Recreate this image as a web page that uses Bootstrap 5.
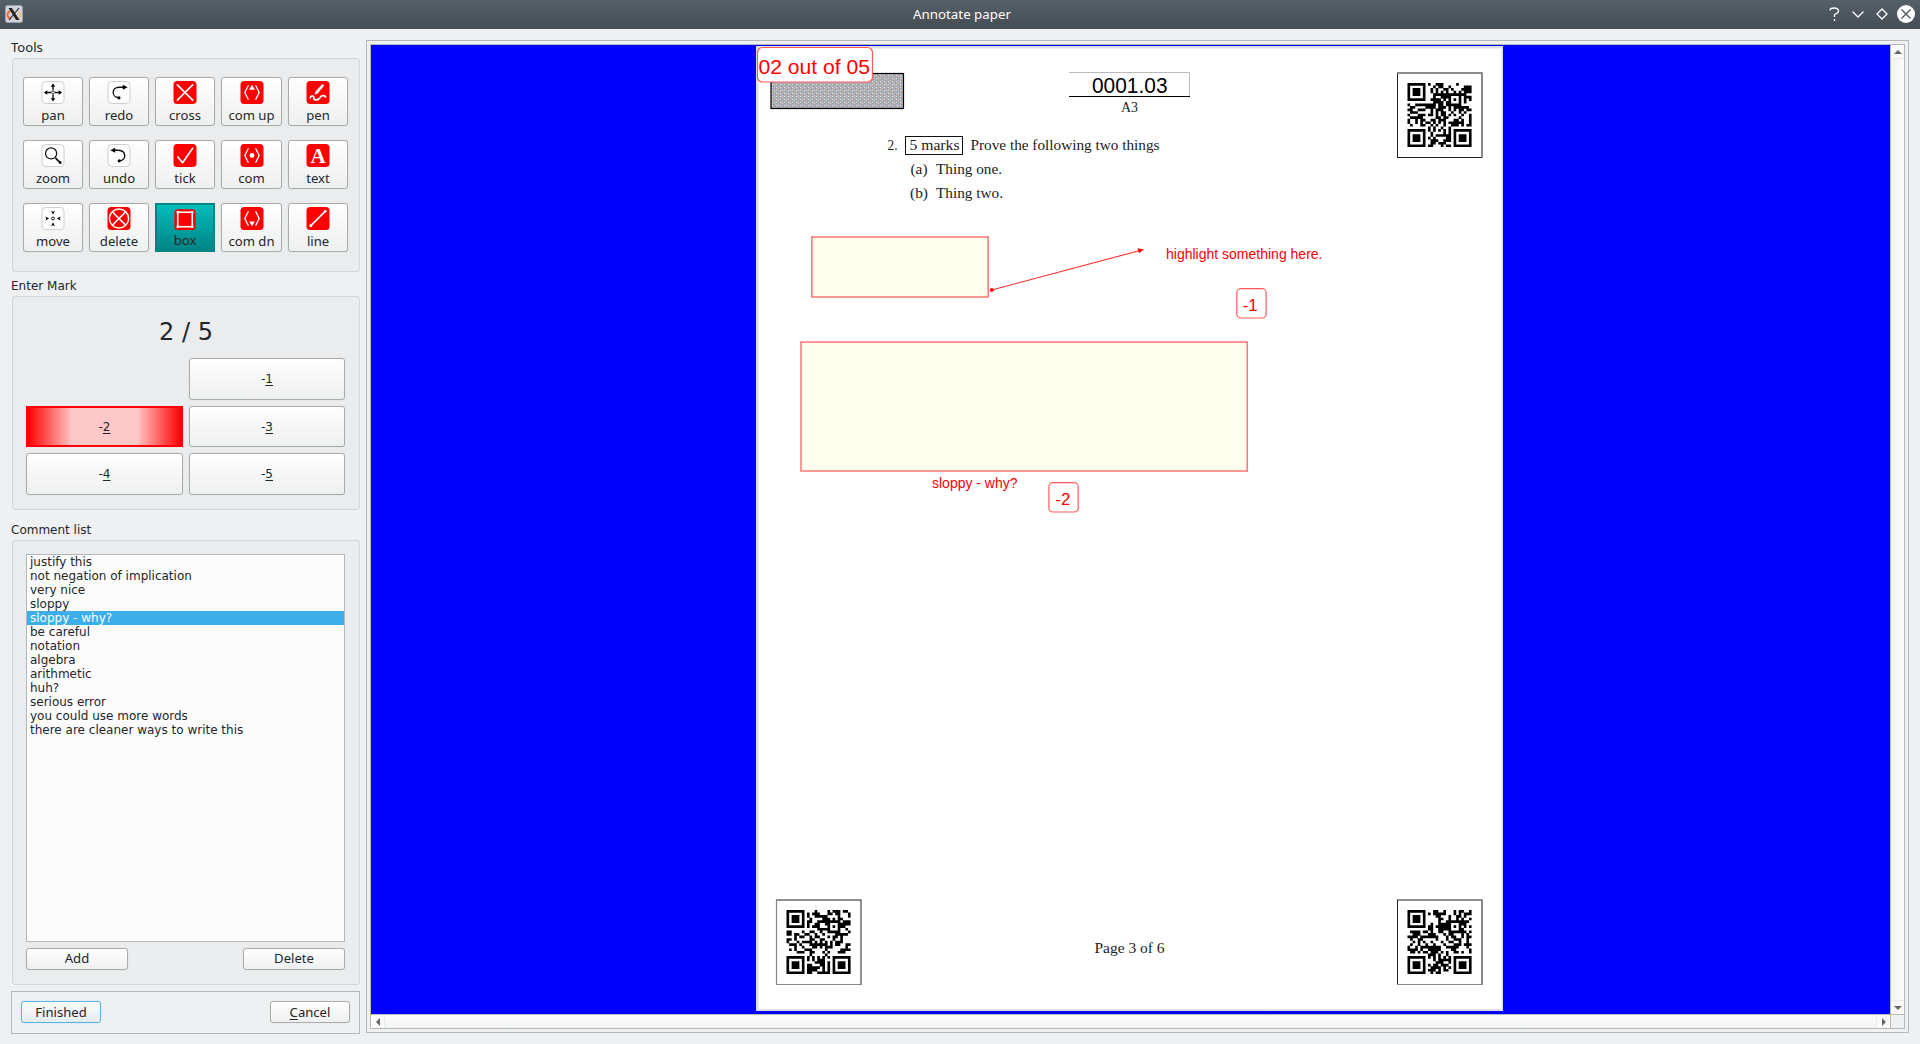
<!DOCTYPE html>
<html lang="en">
<head>
<meta charset="utf-8">
<title>Annotate paper</title>
<link href="https://cdn.jsdelivr.net/npm/bootstrap@5.3.0/dist/css/bootstrap.min.css" rel="stylesheet">
<style>
body{width:1920px;height:1044px;overflow:hidden;background:#eff0f1;color:#232629;font:12px/14px "DejaVu Sans",sans-serif}
.titlebar{height:29px;background:linear-gradient(#566069,#454c54);color:#fcfcfc;font:13.33px/28px "Noto Sans",sans-serif}
.titlebar .side-l{width:200px;padding:5px 0 0 5px}
.titlebar .side-r{width:200px}
.sidebar{width:349px;margin-left:11px}
.grp-label{height:18px;line-height:16px}
.grp-label.noto{font-family:"Noto Sans",sans-serif;font-size:13.1px;line-height:14px}
.grp{background:#ebecee;border:1px solid #d3d5d7;border-radius:3px;margin-left:1px;width:348px;box-shadow:inset 0 0 1px #d8dadc}
.tools{height:214px;padding:18px 10px 0;display:grid;grid-template-columns:60px 60px 60px 61px 60px;column-gap:6px;row-gap:14px;grid-auto-rows:49px}
.qbtn{border:1px solid #a9abad;border-radius:3px;background:linear-gradient(#fefefe,#eeefef);color:#232629;padding:0;font:13.1px/18px "Noto Sans",sans-serif;box-shadow:0 0 1px #c4c6c8}
.tool{display:flex;flex-direction:column;align-items:center;padding-top:3px}
.tool svg{width:24px;height:24px;display:block}
.tool span{line-height:20px;margin-top:1px}
.tool.on{background:linear-gradient(#00bcbc,#008585);border:2px solid #008585;border-radius:0;box-shadow:none;padding-top:3px;color:#232629}
.tool.on svg{width:24px;height:24px}
.tool.on span{margin-top:0;line-height:19px}
.marks{height:214px;padding:22px 13px 0}
.score{font-size:24px;line-height:26px;height:39px}
.mgrid{display:grid;grid-template-columns:157px 156px;gap:6px;grid-template-rows:42px 41px 42px}
.mgrid .qbtn{font:12px/14px "DejaVu Sans",sans-serif}
.mgrid u,.foot u{text-underline-offset:2px}
.mgrid .sel{border:2px solid red;border-radius:0;background:linear-gradient(90deg,red 0,#ffc8c8 29%,#ffc8c8 71%,red 100%);box-shadow:none}
.comments{height:445px;padding:13px 13px 0}
.clist{height:388px;width:319px;border:1px solid #b5b7b9;background:#fcfcfc}
.clist .list-group-item{border:0;border-radius:0;padding:0 3px;background:none;color:#232629;line-height:14px;height:14px}
.clist .list-group-item.active{background:#3daee9;color:#fcfcfc;margin:0}
.duo{margin-top:6px;width:319px}
.duo .qbtn{width:102px;height:22px;padding-bottom:2px}
.foot{height:43px;margin-top:6px;border:1px solid #b5b7b9;padding:9px}
.foot .qbtn{width:80px;height:22px;padding-bottom:1px}
.foot .dflt{border-color:#58b4e2;box-shadow:0 0 1px #7cc5ea;background:linear-gradient(#fcfdfe,#e4ebf0)}
.viewer{width:1543px;height:993px;margin:11px 0 0 6px;border:1px solid #b5b7b9;padding:3px}
.viewin{width:1535px;height:985px;border:1px solid #b5b7b9;display:grid;grid-template-columns:1519px 14px;grid-template-rows:969px 14px}
.canvas-bg{background:#00f}
.vs{border-left:1px solid #b5b7b9;background:linear-gradient(90deg,#f0f2f1,#fcfcfc)}
.hs{border-top:1px solid #b5b7b9;background:linear-gradient(#fcfcfc,#f2f4f3)}
.cnr{border-left:1px solid #b5b7b9;border-top:1px solid #b5b7b9}
.sb{background:#fafafa;display:flex;align-items:center;justify-content:center}
.vs .sb{height:14px}.hs .sb{width:14px}
.canvas-bg svg{display:block}
</style>
</head>
<body>
<header class="titlebar d-flex justify-content-between">
  <div class="side-l"><svg class="d-block" width="18" height="18" viewBox="0 0 18 18"><rect x=".5" y=".5" width="17" height="17" rx="2" fill="#cdd3d8" stroke="#9aa1a7"/><path d="M5 6C1.500 8 1.500 12.500 6 13.800" fill="none" stroke="#f0622a" stroke-width="1.700"/><path d="M13 6C16.500 8 16.500 12.500 11.500 14" fill="none" stroke="#f0b878" stroke-width="1.400"/><path d="M3.500 3h3.400l7.600 12h-3.400z" fill="#222"/><path d="M14 3L4 15" stroke="#222" stroke-width="1.1"/></svg></div>
  <div class="ps-1">Annotate paper</div>
  <div class="side-r"><svg class="d-block" width="200" height="29" fill="none" stroke="#fcfcfc" stroke-width="1.3"><path d="M110 10.5Q110 8 114 8Q118.500 8 118.500 11Q118.500 13 114.500 14.500V17M114.500 19v2"/><path d="M132.500 11.500l5.500 5.500 5.500-5.500M162 9l5 5-5 5-5-5z"/><circle cx="186" cy="14" r="9" fill="#fcfcfc" stroke="none"/><path d="M181.500 9.500l9 9m0-9l-9 9" stroke="#4b545c"/></svg></div>
</header>
<main class="d-flex">
<aside class="sidebar d-flex flex-column">
  <div class="grp-label noto" style="margin-top:11px">Tools</div>
  <section class="grp tools" id="tools"></section>
  <div class="grp-label" style="margin-top:6px">Enter Mark</div>
  <section class="grp marks">
    <div class="score text-center">2 / 5</div>
    <div class="mgrid"><span></span><button class="qbtn">-<u>1</u></button><button class="qbtn sel">-<u>2</u></button><button class="qbtn">-<u>3</u></button><button class="qbtn">-<u>4</u></button><button class="qbtn">-<u>5</u></button></div>
  </section>
  <div class="grp-label" style="margin-top:12px">Comment list</div>
  <section class="grp comments">
    <ul class="clist list-group list-group-flush rounded-0 mb-0">
      <li class="list-group-item">justify this</li><li class="list-group-item">not negation of implication</li><li class="list-group-item">very nice</li><li class="list-group-item">sloppy</li><li class="list-group-item active">sloppy - why?</li><li class="list-group-item">be careful</li><li class="list-group-item">notation</li><li class="list-group-item">algebra</li><li class="list-group-item">arithmetic</li><li class="list-group-item">huh?</li><li class="list-group-item">serious error</li><li class="list-group-item">you could use more words</li><li class="list-group-item">there are cleaner ways to write this</li>
    </ul>
    <div class="duo d-flex justify-content-between"><button class="qbtn">Add</button><button class="qbtn">Delete</button></div>
  </section>
  <div class="foot d-flex justify-content-between"><button class="qbtn dflt">Finished</button><button class="qbtn"><u>C</u>ancel</button></div>
</aside>
<section class="viewer"><div class="viewin">
  <div class="canvas-bg">
  <svg id="sheet" width="1519" height="969" viewBox="371 45 1519 969">
    <defs><pattern id="noise" width="8" height="6" patternUnits="userSpaceOnUse"><rect width="8" height="6" fill="#aeaeb2"/><path d="M0 0h1v1h-1zM4 3h1v1h-1z" fill="#c8f0c8"/><path d="M2 2h1v1h-1zM6 5h1v1h-1z" fill="#b4b4ff"/><path d="M6 1h1v1h-1zM2 4h1v1h-1z" fill="#f0b4b4"/><path d="M4 0h1v1h-1zM0 3h1v1h-1z" fill="#ddd"/><path d="M1 1h1v1h-1zM5 2h1v1h-1zM3 5h1v1h-1zM7 4h1v1h-1z" fill="#949494"/></pattern></defs>
    <rect x="756" y="46" width="747" height="965" fill="#dedede"/>
    <rect x="758.500" y="48.500" width="743" height="960.500" fill="#fff"/>
    <rect x="771" y="73.500" width="132.500" height="35" fill="url(#noise)" stroke="#000" stroke-width="1.200"/>
    <path d="M1069 72.500h120.500V96" fill="none" stroke="#bbb"/><path d="M1069 96.500h121" stroke="#000"/>
    <g font-family="Liberation Sans,sans-serif"><text x="1092" y="92.500" font-size="21.300" textLength="75.500" lengthAdjust="spacingAndGlyphs">0001.03</text></g>
    <g font-family="Liberation Serif,serif" font-size="14.500" fill="#222">
      <text x="1121" y="112" textLength="17" lengthAdjust="spacingAndGlyphs">A3</text>
      <text x="887.500" y="150" textLength="10" lengthAdjust="spacingAndGlyphs">2.</text>
      <text x="909.500" y="150" textLength="50" lengthAdjust="spacingAndGlyphs">5 marks</text>
      <text x="970.500" y="150" textLength="189" lengthAdjust="spacingAndGlyphs">Prove the following two things</text>
      <text x="910.500" y="174" textLength="17" lengthAdjust="spacingAndGlyphs">(a)</text><text x="936" y="174" textLength="66" lengthAdjust="spacingAndGlyphs">Thing one.</text>
      <text x="910" y="198" textLength="18" lengthAdjust="spacingAndGlyphs">(b)</text><text x="936" y="198" textLength="67" lengthAdjust="spacingAndGlyphs">Thing two.</text>
      <text x="1094.500" y="953" textLength="70" lengthAdjust="spacingAndGlyphs">Page 3 of 6</text>
    </g>
    <rect x="905.500" y="136.500" width="57" height="18" fill="none" stroke="#111"/>
    <g id="codes"></g>
    <g stroke="#ff7474" stroke-width="1.500" fill="#ffffee"><rect x="811.800" y="237" width="176.400" height="60"/><rect x="801" y="342" width="446.200" height="129"/></g>
    <path d="M991.800 290L1140 250.500" stroke="#ff2a2a" stroke-width="1.100"/><circle cx="991.800" cy="290" r="1.900" fill="red"/><path d="M1144 249.500l-6.500-1.200 1.500 5z" fill="red"/>
    <g fill="#fff" stroke="#ff5a5a" stroke-width="1.200"><rect x="757.500" y="47.500" width="115" height="34.500" rx="5"/><rect x="1236.800" y="288.700" width="29.300" height="29.300" rx="4"/><rect x="1048.900" y="482.700" width="29.300" height="29.300" rx="4"/></g>
    <g fill="red" font-family="Liberation Sans,sans-serif">
      <text x="758.500" y="73.700" font-size="20" textLength="111.500" lengthAdjust="spacingAndGlyphs">02 out of 05</text>
      <text x="1166" y="259.300" font-size="14" textLength="156.500" lengthAdjust="spacingAndGlyphs">highlight something here.</text>
      <text x="932" y="488" font-size="14" textLength="85.500" lengthAdjust="spacingAndGlyphs">sloppy - why?</text>
      <text x="1242.700" y="310.700" font-size="17">-1</text><text x="1055.300" y="504.700" font-size="17">-2</text>
    </g>
  </svg></div>
  <div class="vs d-flex flex-column justify-content-between"><div class="sb border-bottom border-secondary-subtle"><svg width="8" height="4"><path d="M0 4l4-4 4 4z" fill="#666"/></svg></div><div class="sb border-top border-secondary-subtle"><svg width="8" height="4"><path d="M0 0h8l-4 4z" fill="#666"/></svg></div></div>
  <div class="hs d-flex justify-content-between"><div class="sb border-end border-secondary-subtle"><svg width="4" height="8"><path d="M4 0v8l-4-4z" fill="#666"/></svg></div><div class="sb border-start border-secondary-subtle"><svg width="4" height="8"><path d="M0 0v8l4-4z" fill="#666"/></svg></div></div>
  <div class="cnr"></div>
</div></section>
</main>
<script src="https://cdn.jsdelivr.net/npm/bootstrap@5.3.0/dist/js/bootstrap.bundle.min.js"></script>
<script>
const W='<rect x=".5" y=".5" width="23" height="23" rx="4" fill="#fff" stroke="#ccc"/>',R='<rect width="24" height="24" rx="4" fill="red"/>';
const k=(d,w=1.4)=>`<path d="${d}" fill="none" stroke="#111" stroke-width="${w}"/>`, l=(d,w=1.7)=>`<path d="${d}" fill="none" stroke="#fff" stroke-width="${w}" stroke-linecap="round" stroke-linejoin="round"/>`;
const br=l('M8 5L4.500 12L8 19M16 5l3.500 7L16 19',1.4);
const tools=[
['pan',W+k('M12 4v6M12 14v6M4 12h6M14 12h6')+'<circle cx="12" cy="12" r="1.500" fill="none" stroke="#111" stroke-width=".8"/><path d="M12 2.500l2.300 3.500h-4.600zM12 21.500l2.300-3.500h-4.600zM2.500 12l3.500-2.300v4.600zM21.500 12l-3.500-2.300v4.600z"/>'],
['redo',W+k('M17 6.500H12C4 6.500 4 17 11.500 17.500')+'<circle cx="12" cy="17.600" r="1.600"/><path d="M21 6.500l-5-2.500v5z"/>'],
['cross',R+l('M4 4l16 16M20 4L4 20')],
['com up',R+br+'<path d="M12 4l3 5H9z" fill="#fff"/>'],
['pen',R+'<path d="M16.500 3.500l1.500 1.300-6.500 8-2.500 1 .5-2.300z" fill="#fff" stroke="#fff" stroke-width=".8"/>'+l('M4 17.500C5 14.500 8.500 15.500 7.500 17.800C7.500 20.500 12 20.500 14 17.500C15.500 14.500 18.500 15 20 16.500',1.8)],
['zoom',W+k('M14.500 14.500l5 5',1.8)+'<circle cx="10" cy="9.800" r="5.800" fill="none" stroke="#111" stroke-width="1.300"/><circle cx="19.500" cy="19.500" r="1.400"/>'],
['undo',W+k('M6 6.500h5.500C20 7 20 17 12.500 17.500')+'<circle cx="12.200" cy="17.600" r="1.600"/><path d="M3 6.500l5-2.500v5z"/>'],
['tick',R+l('M4.500 13.500l5 6L20 4.500')],
['com',R+br+'<circle cx="12" cy="12" r="2.500" fill="#fff"/>'],
['text',R+'<text x="12" y="19.500" text-anchor="middle" font-family="Liberation Serif,serif" font-weight="bold" font-size="22" fill="#fff">A</text>'],
['move',W+'<circle cx="12" cy="12" r="1.500" fill="none" stroke="#111" stroke-width="1"/><path d="M12 8l-2-4 2 1 2-1zM12 16l-2 4 2-1 2 1zM8 12l-4-2 1 2-1 2zM16 12l4-2-1 2 1 2z"/>'],
['delete',R+'<circle cx="12" cy="12" r="10" fill="none" stroke="#fff" stroke-width="1.500"/>'+l('M5.500 5.500l13 13M18.500 5.500l-13 13')],
['box','<rect y=".3" width="24" height="23.700" rx="4" fill="red"/><rect x="3.800" y="3.800" width="16.400" height="16.400" fill="none" stroke="#fff" stroke-width="1.800"/><path d="M2.500 2.500h2.600v2.600H2.500zM18.900 2.500h2.600v2.600h-2.600zM2.500 18.900h2.600v2.600H2.500zM18.900 18.900h2.600v2.600h-2.600z" fill="#fff"/>'],
['com dn',R+br+'<path d="M12 20l3-5H9z" fill="#fff"/>'],
['line',R+l('M4.500 19.500L19.500 4.500')+'<circle cx="4.500" cy="19.500" r="1.500" fill="#fff"/><circle cx="19.500" cy="4.500" r="1.500" fill="#fff"/>']];
document.getElementById('tools').innerHTML=tools.map(([n,s])=>`<button class="qbtn tool${n=='box'?' on':''}"><svg viewBox="${n=='box'?'-1 -1 26 26':'0 0 24 24'}">${s}</svg><span>${n}</span></button>`).join('');
// 25-module matrix codes; the corner without a finder is the top right one
function code(x,y,seed,st){
  const m=64/25;let s=seed,d='';
  const f=(i,j)=>{const r=Math.max(Math.abs(i-3),Math.abs(j-3));return r!=2&&r<4};
  for(let j=0;j<25;j++)for(let i=0;i<25;i++){
    s=(s*1103515245+12345)%2147483648;let on=(s>>16)%100<50;
    if(i<8&&j<8)on=f(i,j);else if(i<8&&j>16)on=f(i,j-18);else if(i>16&&j>16)on=f(i-18,j-18);
    else if(i>15&&i<21&&j>3&&j<9)on=Math.max(Math.abs(i-18),Math.abs(j-6))!=1;
    else if(i==6)on=j%2==0;else if(j==18)on=i%2==0;
    if(on)d+=`M${(i*m).toFixed(2)} ${(j*m).toFixed(2)}h2.65v2.65h-2.65z`;
  }
  return `<g transform="translate(${x} ${y})"><rect x=".5" y=".5" width="84.500" height="84.500" fill="#fff" stroke="#222"/><path d="${st}" fill="none" stroke="#888" stroke-width="1.200"/><path transform="translate(10.500 10.500)" d="${d}"/></g>`;
}
document.getElementById('codes').innerHTML=code(1397,72.5,7,'M0 .5H85V85')+code(776,899.5,91,'M.5 0V85H85')+code(1397,899.5,345,'M0 85H85V0');
</script>
</body>
</html>
